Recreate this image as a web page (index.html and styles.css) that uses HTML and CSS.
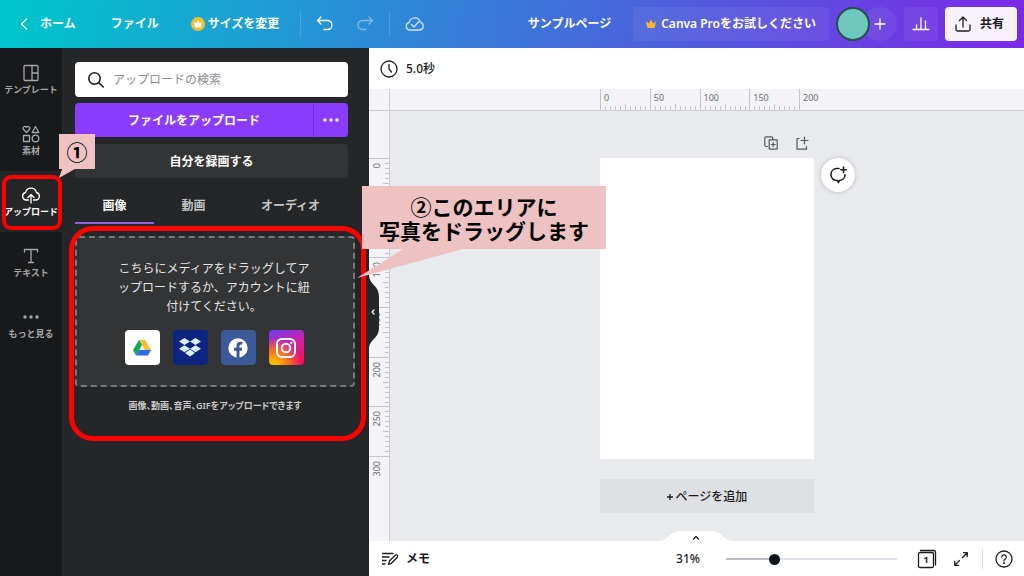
FILE: index.html
```html
<!DOCTYPE html>
<html lang="ja">
<head>
<meta charset="utf-8">
<title>サンプルページ</title>
<link rel="stylesheet" href="styles.css">
</head>
<body>
<div class="app">
  <header class="topbar">
    <a class="home" href="#">
      <svg width="12" height="16" viewBox="0 0 12 16"><path d="M8.500 3 3.500 8l5 5" class="line"/></svg>
      <span>ホーム</span>
    </a>
    <button class="menu-item menu-file">ファイル</button>
    <button class="menu-item menu-resize">
      <svg width="14" height="14" viewBox="0 0 14 14"><circle cx="7" cy="7" r="7" fill="#fdbc2d"/><path d="M3 4.500l2 2 2-3.500 2 3.500 2-2-1 6H4z" fill="#fff"/></svg>
      <span>サイズを変更</span>
    </button>
    <span class="divider"></span>
    <button class="icon-btn" aria-label="元に戻す">
      <svg width="18" height="18" viewBox="0 0 18 18"><path d="M5 2 1.500 5.500 5 9M2 5.500h9.500a4.500 4.500 0 0 1 0 9H8" class="line"/></svg>
    </button>
    <button class="icon-btn redo" aria-label="やり直す">
      <svg width="18" height="18" viewBox="0 0 18 18"><path d="M13 2l3.500 3.500L13 9M16 5.500H6.500a4.500 4.500 0 0 0 0 9H10" class="line"/></svg>
    </button>
    <span class="divider second"></span>
    <button class="icon-btn saved" aria-label="保存済み">
      <svg width="20" height="18" viewBox="0 0 20 18"><path d="M5 15a3.800 3.800 0 0 1-.8-7.500 5.600 5.600 0 0 1 11-.3A4 4 0 0 1 15 15zM6.500 9.500 9 12l4.500-5" class="line"/></svg>
    </button>
    <div class="topbar-right">
      <span class="doc-title">サンプルページ</span>
      <button class="try-pro">
        <svg width="10" height="10" viewBox="0 0 10 10"><path d="M0 2l2.800 2.500L5 .5l2.200 4L10 2 8.800 8.500Q5 9.500 1.200 8.500z" fill="#fdb52c"/></svg>
        <span>Canva Proをお試しください</span>
      </button>
      <div class="members">
        <span class="avatar"></span>
        <button class="add-member" aria-label="メンバーを追加"><svg width="12" height="12" viewBox="0 0 12 12"><path d="M6 1v10M1 6h10" class="line"/></svg></button>
      </div>
      <button class="stats" aria-label="インサイト"><svg width="18" height="18" viewBox="0 0 18 18"><path d="M1 14.500h16M4.500 14v-4M9 14V3M13.500 14V6" class="line"/></svg></button>
      <button class="share">
        <svg width="18" height="18" viewBox="0 0 18 18"><path d="M2 10v4.500a1.500 1.500 0 0 0 1.500 1.500h11a1.500 1.500 0 0 0 1.500-1.500V10M9 12V2M5.500 5.500 9 2l3.500 3.500" class="line"/></svg>
        <span>共有</span>
      </button>
    </div>
  </header>

  <nav class="rail">
    <button class="rail-item">
      <svg width="18" height="18" viewBox="0 0 18 18"><path d="M3 1.500h12a1 1 0 0 1 1 1v13a1 1 0 0 1-1 1H3a1 1 0 0 1-1-1v-13a1 1 0 0 1 1-1zM10 1.500v15M10 9h6" class="line"/></svg>
      <span>テンプレート</span>
    </button>
    <button class="rail-item">
      <svg width="18" height="18" viewBox="0 0 18 18"><path d="M4.500 7.500 1.400 4.300a1.700 1.700 0 0 1 3.100-2 1.700 1.700 0 0 1 3.100 2zM13.500 1.500l3.300 6h-6.600zM1.500 10.500h6v6h-6z" class="line"/><circle cx="13.500" cy="13.500" r="3.300" class="line"/></svg>
      <span>素材</span>
    </button>
    <button class="rail-item active">
      <svg width="18" height="18" viewBox="0 0 18 18"><path d="M6.500 14H4.500A3.800 3.800 0 0 1 3.600 6.500 5.500 5.500 0 0 1 14.400 6.500 3.800 3.800 0 0 1 13.500 14h-2M9 17V8.500M6 11.500l3-3 3 3" class="line"/></svg>
      <span>アップロード</span>
    </button>
    <button class="rail-item">
      <svg width="18" height="18" viewBox="0 0 18 18"><path d="M2.500 5V2.500h13V5M9 2.500v13M6.500 15.500h5" class="line"/></svg>
      <span>テキスト</span>
    </button>
    <button class="rail-item">
      <svg width="18" height="18" viewBox="0 0 18 18"><g fill="currentColor"><circle cx="3" cy="9" r="1.700"/><circle cx="9" cy="9" r="1.700"/><circle cx="15" cy="9" r="1.700"/></g></svg>
      <span>もっと見る</span>
    </button>
    <div class="step-frame"></div>
  </nav>

  <aside class="panel">
    <label class="search">
      <svg width="18" height="18" viewBox="0 0 18 18"><circle cx="7.500" cy="7.500" r="5.700" class="line bold"/><path d="M11.800 11.800l4.500 4.200" class="line bold"/></svg>
      <input type="text" placeholder="アップロードの検索" aria-label="アップロードの検索">
    </label>
    <div class="upload">
      <button class="upload-main">ファイルをアップロード</button>
      <button class="upload-more" aria-label="その他"><svg width="18" height="6" viewBox="0 0 18 6"><g fill="#fff"><circle cx="3" cy="3" r="1.700"/><circle cx="9" cy="3" r="1.700"/><circle cx="15" cy="3" r="1.700"/></g></svg></button>
    </div>
    <button class="record">自分を録画する</button>
    <div class="tabs" role="tablist">
      <button class="tab selected" role="tab" aria-selected="true">画像</button>
      <button class="tab" role="tab">動画</button>
      <button class="tab tab-audio" role="tab">オーディオ</button>
    </div>
    <section class="dropzone">
      <p>こちらにメディアをドラッグしてアップロードするか、アカウントに紐付けてください。</p>
      <div class="sources">
        <button class="source drive" aria-label="Google ドライブ"><svg width="18" height="16" viewBox="0 0 18 16"><path d="M6 0h6l6 10h-6z" fill="#fbbc2c"/><path d="M6 0l3 5-6 10.500L0 10z" fill="#12a85b"/><path d="M6 10h12l-3 5.500H3z" fill="#2b6fe0"/></svg></button>
        <button class="source dropbox" aria-label="Dropbox"><svg width="22" height="19" viewBox="0 0 22 19"><path d="M5.500 0 11 3.500 5.500 7 0 3.500zM16.500 0 22 3.500 16.500 7 11 3.500zM5.500 7.200 11 10.700 5.500 14.200 0 10.700zM16.500 7.200 22 10.700 16.500 14.200 11 10.700zM11 11.600l5 3.500-5 3.400-5-3.400z" fill="#d9f1ff"/></svg></button>
        <button class="source facebook" aria-label="Facebook"><svg width="20" height="20" viewBox="0 0 20 20"><circle cx="10" cy="10" r="9.700" fill="#fff"/><path d="M8.500 20v-7.300H6V9.800h2.500V7.600c0-2.500 1.500-3.900 3.700-3.900l2.200.2v2.500h-1.300c-1.200 0-1.600.8-1.600 1.500v1.900h2.700l-.4 2.900h-2.300V20z" fill="#3b5998"/></svg></button>
        <button class="source instagram" aria-label="Instagram"><svg width="20" height="20" viewBox="0 0 20 20" fill="none" stroke="#fff" stroke-width="2"><rect x="1" y="1" width="18" height="18" rx="5"/><circle cx="10" cy="10" r="4.300"/><circle cx="15.200" cy="4.800" r="1.200" fill="#fff" stroke="none"/></svg></button>
      </div>
    </section>
    <p class="hint">画像、動画、音声、GIFをアップロードできます</p>
    <button class="collapse" aria-label="パネルを閉じる">
      <svg width="11" height="76" viewBox="0 0 11 76"><path d="M0 0c0 12 10 10 10 23v30c0 13-10 11-10 23z" fill="#252627"/><path d="M5 36 3 38l2 2" class="line"/></svg>
    </button>
    <div class="area-frame"></div>
  </aside>

  <main class="editor">
    <div class="toolbar">
      <svg width="18" height="18" viewBox="0 0 18 18"><circle cx="9" cy="9" r="8" class="line"/><path d="M9 4.500V9l2.500 3" class="line"/></svg>
      <span>5.0秒</span>
    </div>
    <div class="workspace">
      <div class="corner"></div>
      <div class="ruler-x"><div class="scale-x"><span>0</span><span>50</span><span>100</span><span>150</span></div><span class="end-x">200</span></div>
      <div class="ruler-y"><div class="scale-y"><span><b>0</b></span><span><b>50</b></span><span><b>100</b></span><span><b>150</b></span><span><b>200</b></span><span><b>250</b></span></div><span class="end-y"><b>300</b></span></div>
      <div class="stage">
        <div class="page-column">
          <div class="page-tools">
            <button aria-label="ページを複製"><svg width="14" height="14" viewBox="0 0 14 14"><path d="M3.500 10.500H2A1.200 1.200 0 0 1 .8 9.300V2A1.200 1.200 0 0 1 2 .8h5.500a1.200 1.200 0 0 1 1.200 1.200v1M5.200 3.800h7.300a.7.700 0 0 1 .7.700v8a.7.700 0 0 1-.7.700H5.900a.7.700 0 0 1-.7-.7zM9.200 6.500v4M7.200 8.500h4" class="line"/></svg></button>
            <button aria-label="ページを追加"><svg width="14" height="14" viewBox="0 0 14 14"><path d="M4 2.500H2v10.700h9.500V10.500M9.500 1v7M6 4.500h7" class="line"/></svg></button>
          </div>
          <div class="sheet"></div>
          <button class="comment" aria-label="コメントを追加"><svg width="20" height="20" viewBox="0 0 20 20"><path d="M11 3.500H8.500a6 6 0 0 0-1 11.800l1.800.2 1 2 1.200-2a6 6 0 0 0 5.500-6M15.500 2v5.500M12.800 4.800h5.500" class="line bold"/></svg></button>
          <button class="add-page"><svg width="6" height="6" viewBox="0 0 6 6"><path d="M3 0v6M0 3h6" class="line"/></svg><span>ページを追加</span></button>
        </div>
        <button class="drawer" aria-label="ページ一覧を表示"><svg width="76" height="11" viewBox="0 0 76 11"><path d="M0 11c12 0 10-10 23-10h30c13 0 11 10 23 10z" fill="#fff"/><path d="M35.500 9 38 6.500l2.500 2.500" class="line"/></svg></button>
      </div>
    </div>
    <footer class="statusbar">
      <button class="notes">
        <svg width="16" height="14" viewBox="0 0 16 14"><path d="M0 1.500h11M0 5h7M0 8.500h4M0 12h3M6.500 12.500l1-3.500 5.800-5.800a1.400 1.400 0 0 1 2 2L9.500 11.200z" class="line"/></svg>
        <span>メモ</span>
      </button>
      <div class="zoom">
        <label for="zoom">31%</label>
        <input id="zoom" type="range" min="0" max="100" value="27">
      </div>
      <button class="status-icon" aria-label="ページ数"><svg width="20" height="20" viewBox="0 0 20 20"><path d="M3.500 1.500h13a2 2 0 0 1 2 2V16" class="line"/><rect x="1.500" y="3.500" width="15" height="15" rx="1.500" class="line"/><text x="9" y="14" class="count">1</text></svg></button>
      <button class="status-icon" aria-label="全画面表示"><svg width="16" height="16" viewBox="0 0 16 16"><path d="M9.500 6.500l4.500-4.500M10.500 1.700h3.800v3.800M6.500 9.500 2 14M1.700 10.500v3.800h3.800" class="line"/></svg></button>
      <span class="status-divider"></span>
      <button class="status-icon" aria-label="ヘルプ"><svg width="18" height="18" viewBox="0 0 18 18"><circle cx="9" cy="9" r="8" class="line"/><path d="M6.700 7.200a2.300 2.300 0 1 1 3.400 2c-.8.500-1.100.8-1.100 1.600" class="line"/><circle cx="9" cy="13" r="1" fill="currentColor"/></svg></button>
    </footer>
  </main>

  <div class="callout callout-one">①<svg width="16" height="9" viewBox="0 0 16 9"><path d="M3 0h13L0 9z" fill="#eec2c2"/></svg></div>
  <div class="callout callout-two">②このエリアに<br>写真をドラッグします<svg width="106" height="30" viewBox="0 0 106 30"><path d="M46 0h60L0 29z" fill="#eec2c2"/></svg></div>
</div>
</body>
</html>
```

FILE: styles.css
```css
* { box-sizing: border-box; }

body {
  margin: 0;
  font-family: "Noto Sans", "Noto Sans CJK JP", sans-serif;
  font-size: 12px;
  line-height: 18px;
  color: #1c1e22;
}

button {
  display: flex;
  align-items: center;
  justify-content: center;
  padding: 0;
  border: 0;
  background: none;
  color: inherit;
  font: inherit;
  white-space: nowrap;
}

p { margin: 0; }
svg { display: block; flex: none; }

.line {
  fill: none;
  stroke: currentColor;
  stroke-width: 1.3;
  stroke-linecap: round;
  stroke-linejoin: round;
}
.line.bold { stroke-width: 1.6; }

.app {
  position: relative;
  display: grid;
  grid-template: 48px minmax(0, 1fr) / 62px 307px minmax(0, 1fr);
  min-height: 100vh;
}

/* Top bar */
.topbar {
  grid-column: 1 / -1;
  display: flex;
  align-items: center;
  padding: 0 7px 0 18px;
  background: linear-gradient(100deg, #00c4cc 2%, #298fd7 34%, #4a64dc 62%, #7a2be6 98%);
  color: #fff;
  font-weight: 600;
}
.home {
  display: flex;
  align-items: center;
  gap: 10px;
  color: inherit;
  text-decoration: none;
}
.menu-file { margin-left: 35px; }
.menu-resize { margin-left: 32px; gap: 3px; }
.divider {
  width: 1px;
  height: 26px;
  margin: 0 15px 0 21px;
  background: rgba(255, 255, 255, 0.15);
}
.divider.second { margin: 0 15px; }
.redo { margin-left: 22px; opacity: 0.4; }
.saved { opacity: 0.75; }
.topbar-right {
  display: flex;
  align-items: center;
  gap: 7px;
  margin-left: auto;
}
.doc-title { margin-right: 15px; }
.try-pro {
  gap: 5px;
  height: 34px;
  padding: 0 13px;
  border-radius: 4px;
  background: rgba(255, 255, 255, 0.06);
}
.members { display: flex; }
.avatar {
  z-index: 1;
  width: 34px;
  height: 34px;
  border: 2px solid #26504f;
  border-radius: 50%;
  background: #70c7bd;
}
.add-member {
  width: 34px;
  height: 34px;
  margin-left: -7px;
  border-radius: 50%;
  background: rgba(255, 255, 255, 0.06);
}
.stats {
  width: 34px;
  height: 34px;
  border-radius: 4px;
  background: rgba(255, 255, 255, 0.06);
}
.share {
  gap: 8px;
  width: 72px;
  height: 34px;
  padding-right: 4px;
  border-radius: 4px;
  background: #f7f2fe;
  color: #1c1e22;
}

/* Navigation rail */
.rail {
  position: relative;
  padding-top: 1px;
  background: #18191b;
}
.rail-item {
  flex-direction: column;
  justify-content: flex-start;
  gap: 2px;
  width: 100%;
  height: 61px;
  padding-top: 15px;
  color: #a5a6a8;
  font-size: 9px;
  line-height: 12px;
  font-weight: 600;
}
.rail-item.active { background: #252627; color: #fff; }
.step-frame {
  position: absolute;
  top: 127px;
  left: 2px;
  width: 60px;
  height: 55px;
  border: 4px solid #fe0000;
  border-radius: 9px;
  z-index: 2;
}

/* Upload panel */
.panel {
  position: relative;
  padding: 14px 21px 0 13px;
  background: #252627;
  color: #fff;
}
.search {
  display: flex;
  align-items: center;
  gap: 8px;
  height: 35px;
  padding: 0 12px;
  border-radius: 4px;
  background: #fff;
  color: #1c1e22;
}
.search input {
  flex: 1;
  min-width: 0;
  padding: 0;
  border: 0;
  outline: 0;
  background: none;
  font: inherit;
}
.search input::placeholder { color: #8b8e92; opacity: 1; }
.upload { display: flex; margin-top: 6px; font-weight: 600; }
.upload-main {
  flex: 1;
  height: 34px;
  padding-top: 1px;
  border-radius: 4px 0 0 4px;
  background: #8b3dff;
}
.upload-more {
  width: 35px;
  border-left: 1px solid #7731d8;
  border-radius: 0 4px 4px 0;
  background: #8b3dff;
}
.record {
  width: 100%;
  height: 34px;
  margin-top: 7px;
  padding-top: 1px;
  border-radius: 4px;
  background: #333436;
  font-weight: 600;
}
.tabs { display: flex; margin-top: 12px; }
.tab {
  width: 79px;
  height: 34px;
  border-bottom: 2px solid transparent;
  color: #c4c5c7;
  font-weight: 600;
}
.tab.selected { border-color: #8f62e0; color: #fff; }
.tab-audio { flex: 1; }
.dropzone {
  display: flex;
  flex-direction: column;
  align-items: center;
  gap: 14px;
  margin: 12px -7px 0 0;
  padding: 21px 43px 20px 41px;
  border: 2px dashed #77787a;
  border-radius: 4px;
  background: #333436;
  color: #e4e4e5;
  line-height: 19px;
  text-align: center;
}
.sources { display: flex; gap: 13px; }
.source { width: 35px; height: 35px; border-radius: 4px; }
.drive { background: #fff; }
.dropbox { background: #0d2481; }
.facebook { background: #3b5998; }
.instagram {
  background:
    radial-gradient(circle at 15% 100%, #ffb800 8%, #fb7a1a 28%, transparent 58%),
    linear-gradient(160deg, #6a3df0, #d31fa8 45%, #f9104e);
}
.hint {
  margin: 12px -7px 0 0;
  color: #c8c9ca;
  font-size: 9px;
  line-height: 14px;
  font-weight: 600;
  font-feature-settings: "palt";
  text-align: center;
}
.collapse {
  position: absolute;
  top: 226px;
  left: 100%;
  z-index: 1;
}
.area-frame {
  position: absolute;
  top: 178px;
  left: 7px;
  right: 3px;
  height: 215px;
  border: 5px solid #fe0000;
  border-radius: 24px;
}

/* Editor */
.editor {
  display: flex;
  flex-direction: column;
}
.toolbar {
  display: flex;
  align-items: center;
  gap: 8px;
  height: 41px;
  padding: 1px 0 0 11px;
  background: #fff;
  font-weight: 500;
}
.workspace {
  flex: 1;
  display: grid;
  grid-template: 22px minmax(0, 1fr) / 21px minmax(0, 1fr);
  background: #e9eaee;
}
.corner, .ruler-x, .ruler-y {
  background-color: #f4f4f8;
  color: #6a6d73;
  font-size: 9px;
  line-height: 15px;
}
.corner, .ruler-x { border-bottom: 1px solid #c9ccd2; }
.corner, .ruler-y { border-right: 1px solid #c9ccd2; }
.ruler-x { display: flex; padding-left: calc(50% - 107px); }
.scale-x { display: flex; width: 199px; }
.scale-x span, .end-x {
  padding: 1px 0 0 3px;
  border-left: 1px solid #c3c6cd;
}
.scale-x span {
  flex: 1 1 0;
  background:
    linear-gradient(90deg, transparent 4px, #c3c6cd 4px) 0 100% / 5px 4px repeat-x,
    linear-gradient(#c3c6cd, #c3c6cd) 24px 100% / 1px 6px no-repeat;
}
.ruler-y {
  display: flex;
  flex-direction: column;
  padding-top: 47px;
}
.scale-y {
  display: flex;
  flex-direction: column;
  height: 298px;
}
.scale-y span, .end-y {
  padding: 4px 0 0 0;
  border-top: 1px solid #c3c6cd;
}
.scale-y span {
  flex: 1 1 0;
  background:
    linear-gradient(transparent 4px, #c3c6cd 4px) 100% 0 / 4px 5px repeat-y,
    linear-gradient(#c3c6cd, #c3c6cd) 100% 24px / 6px 1px no-repeat;
}
.ruler-y b {
  display: block;
  width: 15px;
  writing-mode: vertical-rl;
  transform: rotate(180deg);
  font-weight: 400;
  text-align: right;
}
.stage {
  position: relative;
  display: flex;
  justify-content: center;
  padding-bottom: 28px;
}
.page-column { position: relative; width: 214px; }
.page-tools {
  display: flex;
  align-items: flex-start;
  justify-content: flex-end;
  gap: 17px;
  height: 47px;
  padding: 25px 5px 0 0;
  color: #55585e;
}
.page-tools .line { stroke-width: 1.2; }
.sheet {
  height: 301px;
  background: #fff;
}
.comment {
  position: absolute;
  top: 47px;
  left: calc(100% + 7px);
  width: 34px;
  height: 34px;
  border-radius: 50%;
  background: #fff;
  box-shadow: 0 0 4px rgba(40, 45, 60, 0.25);
}
.add-page {
  gap: 3px;
  width: 100%;
  height: 34px;
  margin-top: 20px;
  padding-top: 1px;
  background: #dfe0e4;
  font-weight: 500;
}
.drawer {
  position: absolute;
  bottom: 0;
  left: calc(50% - 49px);
}

/* Status bar */
.statusbar {
  display: flex;
  align-items: center;
  height: 35px;
  padding: 1px 11px 0 13px;
  background: #fff;
  font-weight: 500;
}
.notes { gap: 8px; font-weight: 600; }
.zoom {
  display: flex;
  align-items: center;
  gap: 26px;
  margin: 0 20px 0 auto;
}
.zoom input {
  width: 171px;
  height: 12px;
  margin: 0;
  appearance: none;
  background: linear-gradient(90deg, #b9bcc1 28%, #dfe1e6 28%) 0 50% / 100% 2px no-repeat;
}
.zoom input::-webkit-slider-thumb {
  appearance: none;
  width: 11px;
  height: 11px;
  border-radius: 50%;
  background: #0e1318;
}
.status-icon + .status-icon { margin-left: 16px; }
.count {
  fill: currentColor;
  font-size: 9px;
  font-weight: 700;
  text-anchor: middle;
}
.status-divider {
  width: 1px;
  height: 20px;
  margin: 0 12px 0 13px;
  background: #dcdee3;
}

/* Tutorial callouts */
.callout {
  position: absolute;
  z-index: 5;
  background: #eec2c2;
  color: #000;
  font-family: "Liberation Sans", "Noto Sans CJK JP", sans-serif;
  font-weight: 600;
  text-align: center;
}
.callout svg { position: absolute; top: 100%; }
.callout-one {
  top: 134px;
  left: 59px;
  width: 36px;
  padding: 6px 0 4px;
  font-size: 21px;
  line-height: 25px;
}
.callout-one svg { left: 0; }
.callout-two {
  top: 186px;
  left: 362px;
  width: 244px;
  padding: 10px 0 5px;
  font-size: 21px;
  line-height: 24px;
}
.callout-two svg { left: -5px; }
```
